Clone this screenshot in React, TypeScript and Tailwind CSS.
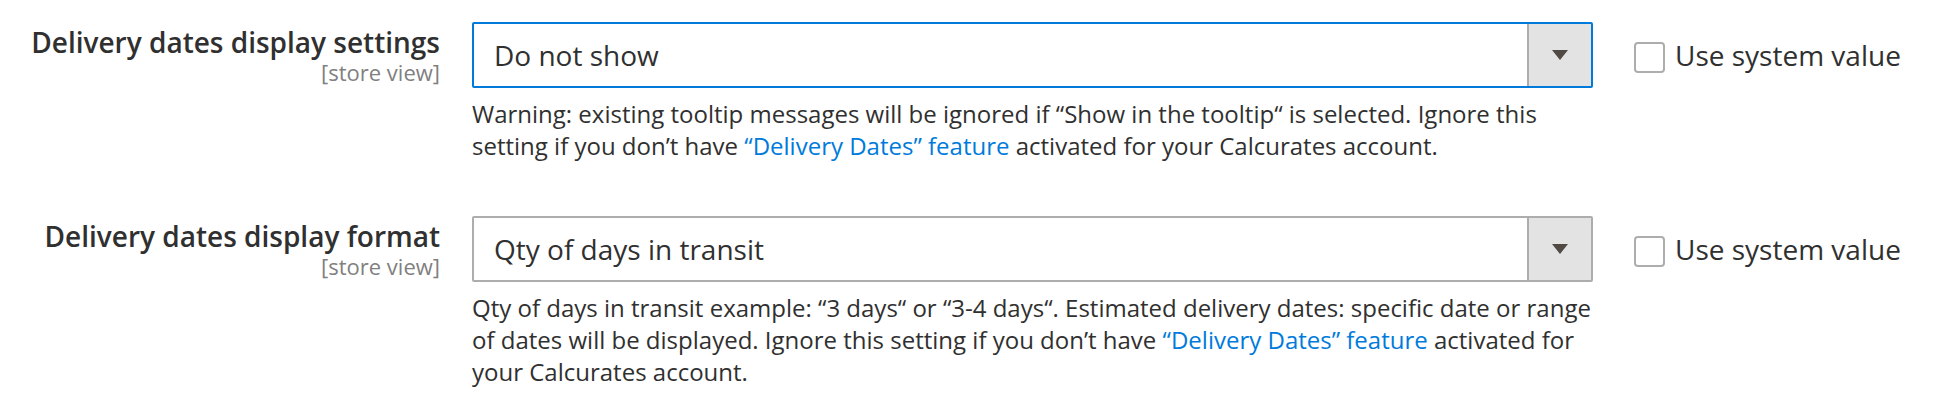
import React from 'react';

type FieldProps = {
  label: string;
  value: string;
  focused?: boolean;
  children: React.ReactNode;
};

const link = <a className="text-[#007bdb]">“Delivery Dates” feature</a>;

function SelectField({ label, value, focused, children }: FieldProps) {
  return (
    <div className="flex items-start">
      <div className="w-[440px] shrink-0 text-right pt-[3px]">
        <div className="text-[28px] leading-[34px] font-semibold text-[#303030]">{label}</div>
        <div className="text-[22px] leading-[26px] text-[#808080]">[store view]</div>
      </div>
      <div className="w-[1121px] shrink-0 ml-[32px]">
        <div
          className={
            focused
              ? 'flex h-[66px] rounded-[2px] border-2 border-[#007bdb] bg-white'
              : 'flex h-[66px] rounded-[2px] border-2 border-[#adadad] bg-white'
          }
        >
          <div className="flex flex-1 items-center pl-[20px] text-[28px] text-[#303030]">{value}</div>
          <div className="flex w-[64px] items-center justify-center border-l-2 border-[#adadad] bg-[#e3e3e3]">
            <svg width="16" height="10" viewBox="0 0 16 10">
              <path d="M0 0h16L8 10z" fill="#514943" />
            </svg>
          </div>
        </div>
        <p className="mt-[10px] text-[24px] leading-[32px] text-[#303030]">{children}</p>
      </div>
      <div className="ml-[41px] flex h-[66px] items-center">
        <span className="mt-[5px] h-[31px] w-[31px] rounded-[4px] border-2 border-[#adadad] bg-white" />
        <span className="ml-[10px] text-[28px] leading-[40px] text-[#303030]">Use system value</span>
      </div>
    </div>
  );
}

export default function App() {
  return (
    <div className="min-h-[414px] bg-white pt-[22px] font-['Open_Sans',sans-serif]">
      <div className="flex flex-col gap-[54px]">
        <SelectField label="Delivery dates display settings" value="Do not show" focused>
          Warning: existing tooltip messages will be ignored if “Show in the tooltip“ is selected. Ignore this
          setting if you don’t have {link} activated for your Calcurates account.
        </SelectField>
        <SelectField label="Delivery dates display format" value="Qty of days in transit">
          Qty of days in transit example: “3 days“ or “3-4 days“. Estimated delivery dates: specific date or range
          of dates will be displayed. Ignore this setting if you don’t have {link} activated for your Calcurates
          account.
        </SelectField>
      </div>
    </div>
  );
}
